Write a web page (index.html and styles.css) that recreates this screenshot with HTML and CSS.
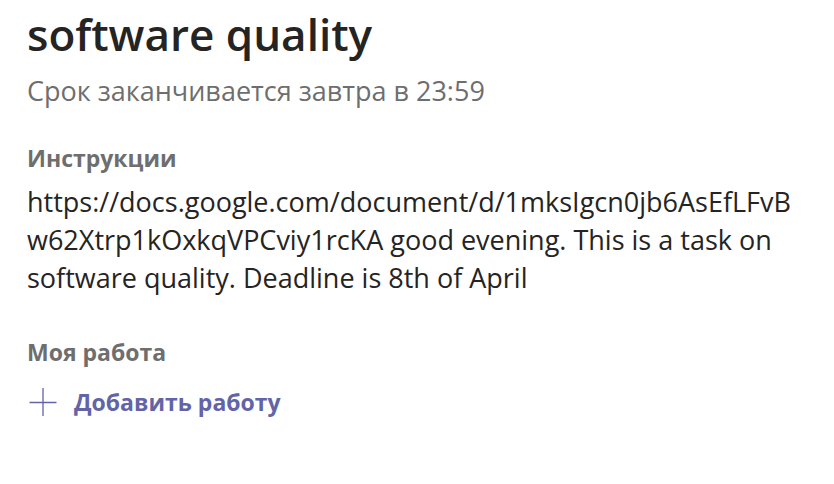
FILE: index.html
```html
<!DOCTYPE html>
<html lang="ru">
<head>
<meta charset="utf-8">
<title>software quality</title>
<link rel="stylesheet" href="styles.css">
</head>
<body>
<main class="assignment">
  <h1 class="title">software quality</h1>
  <p class="due">Срок заканчивается завтра в 23:59</p>
  <section class="section section-instructions">
    <h2 class="section-title">Инструкции</h2>
    <p class="instructions">https://docs.google.com/document/d/1mksIgcn0jb6AsEfLFvBw62Xtrp1kOxkqVPCviy1rcKA good evening. This is a task on software quality. Deadline is 8th of April</p>
  </section>
  <section class="section section-work">
    <h2 class="section-title">Моя работа</h2>
    <button class="add-work" type="button">
      <svg class="add-icon" viewBox="0 0 28 30" width="28" height="30" aria-hidden="true">
        <path d="M14 1v28M0.5 15.5h27" fill="none" stroke="currentColor" stroke-width="1.3"/>
      </svg>
      <span class="add-label">Добавить работу</span>
    </button>
  </section>
</main>
</body>
</html>
```
FILE: styles.css
```css
* { box-sizing: border-box; }
html, body { margin: 0; padding: 0; background: #ffffff; }
body {
  font-family: "Open Sans", "Noto Sans", sans-serif;
  color: #252423;
}
.assignment {
  padding: 8px 34px 0 27px;
  display: flex;
  flex-direction: column;
}
.title {
  margin: 0;
  font-size: 44px;
  line-height: 52px;
  font-weight: 600;
  color: #252423;
}
.due {
  margin: 13px 0 0;
  font-size: 27px;
  line-height: 36px;
  color: #6e6e6e;
}
.section { display: flex; flex-direction: column; }
.section-instructions { margin-top: 35px; }
.section-work { margin-top: 41px; }
.section-title {
  margin: 0;
  font-size: 23px;
  line-height: 28px;
  font-weight: 700;
  color: #6e6e6e;
}
.instructions {
  margin: 11px 0 0;
  font-size: 27px;
  line-height: 38px;
  overflow-wrap: anywhere;
}
.add-work {
  margin: 21px 0 0;
  padding: 0 0 0 2px;
  border: 0;
  background: none;
  display: flex;
  align-items: center;
  gap: 17px;
  color: #6264a7;
  font-family: inherit;
  cursor: pointer;
  align-self: flex-start;
}
.add-icon { display: block; flex: none; }
.add-label {
  font-size: 23px;
  line-height: 28px;
  font-weight: 700;
}
```
